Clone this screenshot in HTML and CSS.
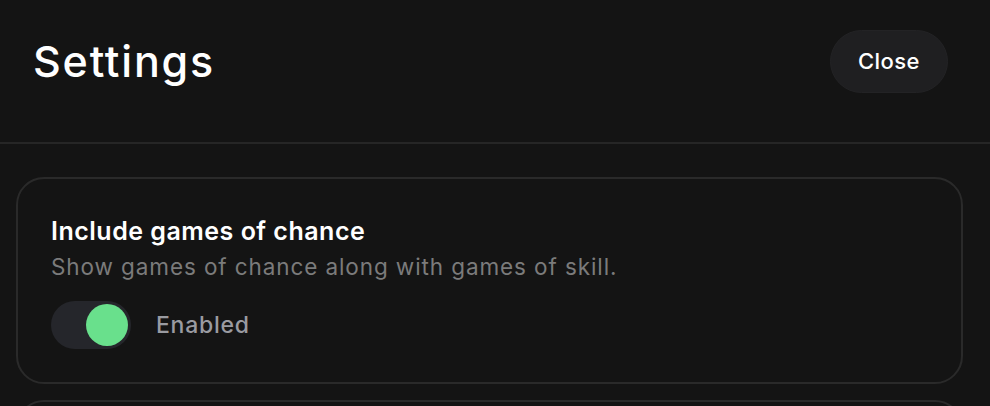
FILE: index.html
```html
<!DOCTYPE html>
<html lang="en">
<head>
<meta charset="utf-8">
<title>Settings</title>
<link rel="stylesheet" href="styles.css">
</head>
<body>
<div class="page">
  <header class="header">
    <h1 class="title">Settings</h1>
    <button class="close-btn" type="button">Close</button>
  </header>
  <main class="content">
    <section class="card">
      <h2 class="card-title">Include games of chance</h2>
      <p class="card-desc">Show games of chance along with games of skill.</p>
      <div class="toggle-row">
        <span class="toggle on"><span class="knob"></span></span>
        <span class="toggle-label">Enabled</span>
      </div>
    </section>
    <section class="card"></section>
  </main>
</div>
</body>
</html>
```
FILE: styles.css
```css
* { box-sizing: border-box; }
html, body {
  margin: 0;
  padding: 0;
  background: #141414;
  height: 100%;
  overflow: hidden;
}
body {
  font-family: Inter, "Noto Sans", sans-serif;
  color: #ffffff;
}
.header {
  display: flex;
  align-items: center;
  justify-content: space-between;
  height: 144px;
  padding: 0 42px 20px 33px;
  border-bottom: 2px solid #262626;
}
.title {
  margin: 0;
  font-size: 43px;
  font-weight: 500;
  letter-spacing: 1.8px;
}
.close-btn {
  font-family: inherit;
  font-size: 22px;
  font-weight: 500;
  letter-spacing: 0.45px;
  color: #ffffff;
  background: #1f1f21;
  border: 1px solid #232325;
  border-radius: 999px;
  width: 118px;
  height: 63px;
  padding: 0;
}
.content {
  display: flex;
  flex-direction: column;
  gap: 16px;
  padding: 33px 27px 0 16px;
}
.card {
  border: 2px solid #2a2a2a;
  border-radius: 28px;
  padding: 36px 34px 30px 33px;
  min-height: 207px;
}
.card-title {
  margin: 0;
  font-size: 25px;
  font-weight: 600;
  letter-spacing: 0.5px;
  line-height: 32px;
}
.card-desc {
  margin: 6px 0 0;
  font-size: 22.5px;
  letter-spacing: 0.9px;
  line-height: 28px;
  color: #7b7b7b;
}
.toggle-row {
  display: flex;
  align-items: center;
  gap: 25px;
  margin-top: 20px;
}
.toggle {
  display: flex;
  align-items: center;
  justify-content: flex-end;
  width: 80px;
  height: 48px;
  padding: 3px;
  border-radius: 999px;
  background: #25262b;
}
.knob {
  width: 42px;
  height: 42px;
  border-radius: 50%;
  background: #69e08c;
}
.toggle-label {
  font-size: 23px;
  font-weight: 500;
  letter-spacing: 0.75px;
  color: #9a9ba1;
}
```
